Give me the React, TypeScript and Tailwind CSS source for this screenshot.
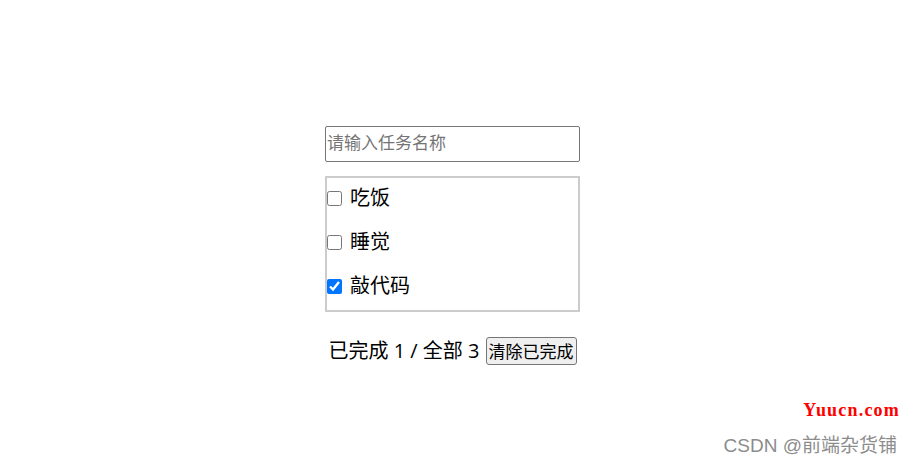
import { useState } from "react";

type Todo = { id: number; title: string; done: boolean };

const INITIAL: Todo[] = [
  { id: 1, title: "吃饭", done: false },
  { id: 2, title: "睡觉", done: false },
  { id: 3, title: "敲代码", done: true },
];

const CJK = "font-['Open_Sans','Noto_Sans_CJK_SC',sans-serif]";

export default function App() {
  const [todos, setTodos] = useState<Todo[]>(INITIAL);
  const [title, setTitle] = useState("");

  const doneCount = todos.filter((t) => t.done).length;

  const toggle = (id: number) =>
    setTodos((list) =>
      list.map((t) => (t.id === id ? { ...t, done: !t.done } : t))
    );

  const add = () => {
    const v = title.trim();
    if (!v) return;
    setTodos((list) => [...list, { id: Date.now(), title: v, done: false }]);
    setTitle("");
  };

  return (
    <div className={`relative min-h-[466px] w-full bg-white text-black ${CJK}`}>
      <div className="flex w-[580px] flex-col pl-[325px] pt-[126px]">
        {/* header input */}
        <input
          value={title}
          onChange={(e) => setTitle(e.target.value)}
          onKeyDown={(e) => e.key === "Enter" && add()}
          placeholder="请输入任务名称"
          className="h-[36px] w-[255px] rounded-[2px] border border-[#767676] px-[1px] pb-[3px] text-[17px] leading-none outline-none placeholder:text-[#757575]"
        />

        {/* list */}
        <ul className="mt-[14px] flex w-[255px] flex-col gap-[4px] border-2 border-[#cccccc] pb-[4px]">
          {todos.map((t) => (
            <li key={t.id} className="flex h-[40px] items-center">
              <input
                type="checkbox"
                checked={t.done}
                onChange={() => toggle(t.id)}
                className="m-0 h-[15px] w-[15px] accent-[#0075ff]"
              />
              <span className="ml-[8px] text-[20px] leading-none">{t.title}</span>
            </li>
          ))}
        </ul>

        {/* footer */}
        <div className="mt-[25px] flex h-[28px] w-[255px] items-center justify-center">
          <span className="text-[20px] leading-none">
            已完成 {doneCount} / 全部 {todos.length}
          </span>
          <button
            onClick={() => setTodos((list) => list.filter((t) => !t.done))}
            className="ml-[6px] h-[28px] rounded-[3px] border border-[#767676] bg-[#efefef] px-[2px] text-[17px] leading-none"
          >
            清除已完成
          </button>
        </div>
      </div>

      {/* watermarks */}
      <div className="absolute right-[12px] top-[401px] font-['Liberation_Serif',serif] text-[18px] font-bold leading-none tracking-[1.2px] text-[#ff0000]">
        Yuucn.com
      </div>
      <div className="absolute right-[15px] top-[436px] font-['Liberation_Sans','Noto_Sans_CJK_SC',sans-serif] text-[19px] leading-none text-[#8c8c8c]">
        CSDN @前端杂货铺
      </div>
    </div>
  );
}
